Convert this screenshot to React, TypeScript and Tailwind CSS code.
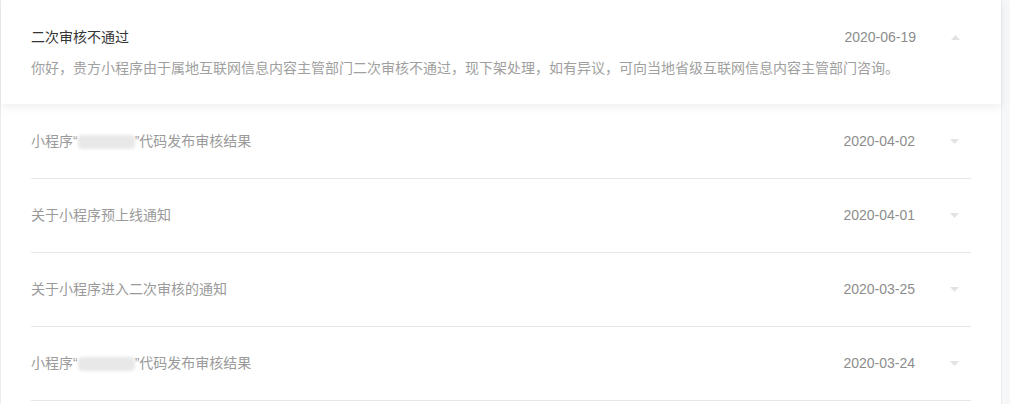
import React from 'react';

const font = { fontFamily: '"Liberation Sans", "Noto Sans CJK SC", sans-serif' };

const Blur = () => (
  <span className="inline-block align-middle w-[57px] h-[14px] rounded-sm bg-[#e8e8e8] blur-[1.5px]" />
);

interface Item {
  title: React.ReactNode;
  date: string;
}

const items: Item[] = [
  { title: <>小程序“<Blur />”代码发布审核结果</>, date: '2020-04-02' },
  { title: '关于小程序预上线通知', date: '2020-04-01' },
  { title: '关于小程序进入二次审核的通知', date: '2020-03-25' },
  { title: <>小程序“<Blur />”代码发布审核结果</>, date: '2020-03-24' },
];

const Arrow = ({ up }: { up?: boolean }) => (
  <svg width="9" height="5" viewBox="0 0 9 5" className="block">
    {up ? <path d="M4.5 0L9 5H0z" fill="#e3e3e6" /> : <path d="M0 0h9L4.5 5z" fill="#e3e3e6" />}
  </svg>
);

export default function App() {
  return (
    <div className="w-[1010px] h-[404px] overflow-hidden bg-[#f6f7f9] flex text-[14px]" style={font}>
      <div className="w-[1002px] h-full bg-white border-l border-r border-[#ececee]">
        {/* expanded notice */}
        <div className="relative z-10 h-[104px] bg-white shadow-[0_3px_10px_rgba(0,0,0,0.07)] pl-[30px] pr-[29px] pt-[27px]">
          <div className="flex items-center h-[20px]">
            <span className="flex-1 text-[#353535]">二次审核不通过</span>
            <span className="text-[#8d8d8d]">2020-06-19</span>
            <span className="w-[56px] pl-[35px]"><Arrow up /></span>
          </div>
          <p className="mt-[11px] leading-[20px] text-[#a0a0a0]">
            你好，贵方小程序由于属地互联网信息内容主管部门二次审核不通过，现下架处理，如有异议，可向当地省级互联网信息内容主管部门咨询。
          </p>
        </div>
        <div className="ml-[30px] mt-[1px] w-[940px]">
          {items.map((it, i) => (
            <div key={i} className="flex items-center h-[74px] border-b border-[#e7e7e9]">
              <span className="flex-1 text-[#9a9a9a]">{it.title}</span>
              <span className="text-[#8d8d8d]">{it.date}</span>
              <span className="w-[56px] pl-[35px]"><Arrow /></span>
            </div>
          ))}
        </div>
      </div>
    </div>
  );
}
